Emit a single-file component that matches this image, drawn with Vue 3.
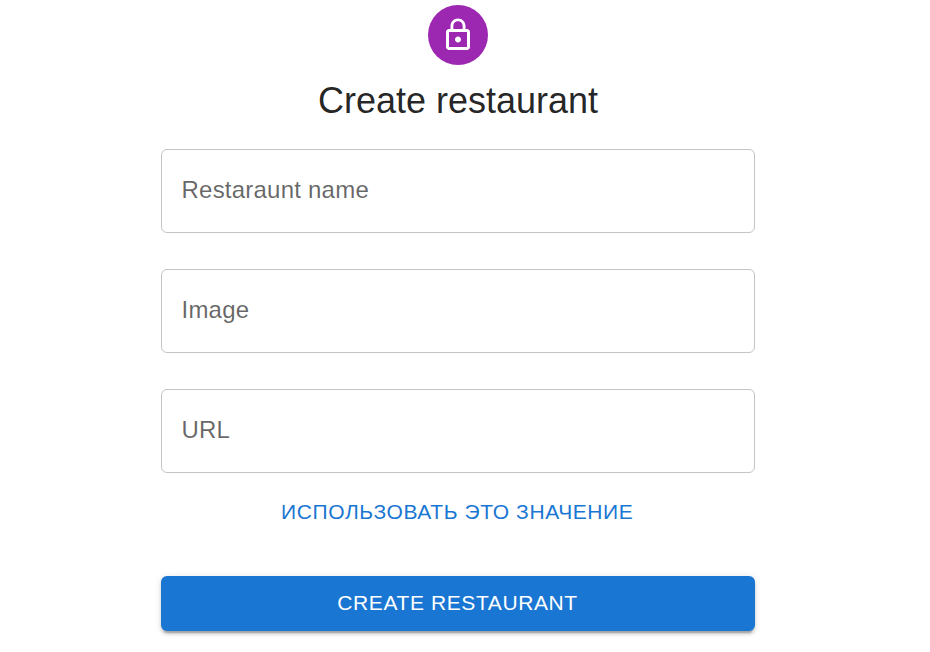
<script setup>
const fields = ['Restaraunt name', 'Image', 'URL']
</script>

<template>
  <main class="page">
    <form class="form" @submit.prevent>
      <div class="avatar">
        <svg viewBox="0 0 24 24" width="36" height="36" fill="#fff">
          <path d="M12 17c1.1 0 2-.9 2-2s-.9-2-2-2-2 .9-2 2 .9 2 2 2zm6-9h-1V6c0-2.760-2.240-5-5-5S7 3.240 7 6v2H6c-1.100 0-2 .9-2 2v10c0 1.100.9 2 2 2h12c1.100 0 2-.9 2-2V10c0-1.100-.9-2-2-2zM8.900 6c0-1.710 1.390-3.100 3.100-3.100s3.100 1.390 3.100 3.100v2H8.900V6zM18 20H6V10h12v10z" />
        </svg>
      </div>
      <h1 class="title">Create restaurant</h1>
      <div class="fields">
        <label v-for="f in fields" :key="f" class="field">{{ f }}</label>
      </div>
      <button type="button" class="btn text">Использовать это значение</button>
      <button type="submit" class="btn contained">Create restaurant</button>
    </form>
  </main>
</template>

<style>
body { background: #fff; }
</style>

<style scoped>
.page {
  box-sizing: border-box;
  height: 652px;
  padding: 5px 0 0 161px;
  overflow: hidden;
  font-family: "Liberation Sans", Arial, sans-serif;
}
.form {
  width: 594px;
  display: flex;
  flex-direction: column;
  align-items: center;
}
.avatar {
  width: 60px;
  height: 60px;
  border-radius: 50%;
  background: #9c27b0;
  display: flex;
  align-items: center;
  justify-content: center;
}
.avatar svg { display: block; }
.title {
  margin: 12px 0 0;
  font-size: 36px;
  line-height: 48px;
  font-weight: 400;
  color: rgba(0, 0, 0, 0.87);
}
.fields {
  width: 100%;
  margin-top: 24px;
  display: flex;
  flex-direction: column;
  gap: 36px;
}
.field {
  box-sizing: border-box;
  height: 84px;
  padding: 0 19.5px 2px;
  display: flex;
  align-items: center;
  border: 1px solid #c4c4c4;
  border-radius: 6px;
  font-size: 24px;
  letter-spacing: 0.225px;
  color: rgba(0, 0, 0, 0.6);
}
.btn {
  border: 0;
  padding: 0 1px 0 0;
  font-family: inherit;
  font-size: 21px;
  letter-spacing: 0.6px;
  text-transform: uppercase;
}
.text {
  height: 54px;
  margin-top: 12px;
  padding-right: 1.5px;
  background: none;
  color: #1976d2;
}
.contained {
  width: 100%;
  height: 55px;
  margin-top: 37px;
  padding-bottom: 2px;
  border-radius: 6px;
  color: #fff;
  background: #1976d2;
  box-shadow: 0 4.5px 1.5px -3px rgba(0, 0, 0, 0.2), 0 3px 3px rgba(0, 0, 0, 0.14), 0 1.5px 7.5px rgba(0, 0, 0, 0.12);
}
</style>
